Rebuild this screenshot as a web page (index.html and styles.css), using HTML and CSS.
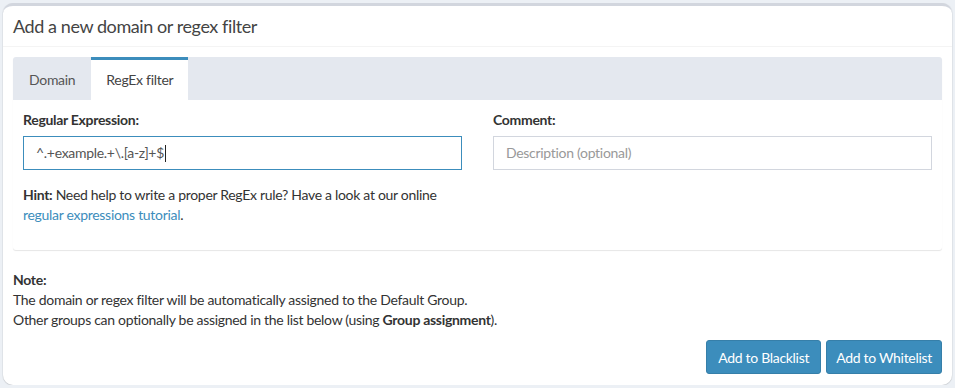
FILE: index.html
```html
<!DOCTYPE html>
<html>
<head>
<meta charset="utf-8">
<link rel="stylesheet" href="styles.css">
</head>
<body>
<div class="box">
  <div class="box-header">
    <h3 class="box-title">Add a new domain or regex filter</h3>
  </div>
  <div class="box-body">
    <div class="tabs">
      <ul class="nav">
        <li class="tab">Domain</li>
        <li class="tab active">RegEx filter</li>
      </ul>
      <div class="tab-content">
        <div class="row">
          <div class="form-group">
            <label class="label">Regular Expression:</label>
            <div class="input focused"><span class="val">^.+example.+\.[a-z]+$</span><span class="caret"></span></div>
          </div>
          <div class="form-group">
            <label class="label">Comment:</label>
            <div class="input"><span class="ph">Description (optional)</span></div>
          </div>
        </div>
        <p class="hint"><strong>Hint:</strong> Need help to write a proper RegEx rule? Have a look at our online<br><a class="link">regular expressions tutorial</a>.</p>
      </div>
    </div>
    <p class="note"><strong>Note:</strong><br>The domain or regex filter will be automatically assigned to the Default Group.<br>Other groups can optionally be assigned in the list below (using <strong>Group assignment</strong>).</p>
    <div class="actions">
      <button class="btn">Add to Blacklist</button>
      <button class="btn">Add to Whitelist</button>
    </div>
  </div>
</div>
</body>
</html>
```
FILE: styles.css
```css
* { box-sizing: border-box; }
html, body { margin: 0; padding: 0; }
body {
  background: #ecf0f5;
  font-family: "Lato", "Open Sans", sans-serif;
  font-size: 14px;
  line-height: 20px;
  letter-spacing: -0.3px;
  color: #333;
  padding: 3px 3px 0 3px;
}
.box {
  background: #fff;
  border-top: 3px solid #d2d6de;
  border-radius: 10px;
  box-shadow: 0 1px 1px rgba(0,0,0,0.12), -1px 0 0 rgba(0,0,0,0.04), 1px 0 0 rgba(0,0,0,0.04);
  height: 382px;
}
.box-header {
  padding: 0 10px;
  height: 41px;
  border-bottom: 1px solid #f4f4f4;
  display: flex;
  align-items: center;
}
.box-title {
  margin: 0;
  font-size: 18px;
  font-weight: normal;
  letter-spacing: -0.42px;
  color: #444;
  line-height: 1;
}
.box-body { padding: 10px; }
.tabs {
  background: #fff;
  box-shadow: 0 1px 1px rgba(0,0,0,0.1);
  border-radius: 3px;
}
.nav {
  list-style: none;
  margin: 0;
  padding: 0;
  display: flex;
  background: #e4e8ef;
  border-radius: 3px 3px 0 0;
  height: 43px;
}
.tab {
  padding: 0 16px;
  display: flex;
  align-items: center;
  color: #555;
  border-top: 3px solid transparent;
}
.tab.active {
  background: #fff;
  border-top-color: #3c8dbc;
  color: #444;
  padding: 0 15px;
}
.tab-content { padding: 10px 10px 25px; }
.row {
  display: grid;
  grid-template-columns: 1fr 1fr;
  column-gap: 31px;
}
.form-group { margin-bottom: 15px; }
.label {
  display: block;
  font-weight: bold;
  margin-bottom: 6px;
  color: #333;
}
.input {
  height: 34px;
  border: 1px solid #d2d6de;
  padding: 0 12px;
  display: flex;
  align-items: center;
  color: #555;
}
.input.focused { border-color: #3c8dbc; }
.caret {
  display: inline-block;
  width: 1px;
  height: 17px;
  background: #222;
  margin-left: 1px;
}
.ph { color: #999; }
.hint { margin: 0; }
.link { color: #3c8dbc; text-decoration: none; }
.note { margin: 20px 0 10px; }
.actions {
  display: flex;
  justify-content: flex-end;
  gap: 5px;
}
.btn {
  font-family: inherit;
  font-size: 14px;
  letter-spacing: -0.3px;
  height: 34px;
  padding: 0 11px;
  background: #3c8dbc;
  border: 1px solid #367fa9;
  border-radius: 3px;
  color: #fff;
}
.btn + .btn { padding: 0 9px; }
```
